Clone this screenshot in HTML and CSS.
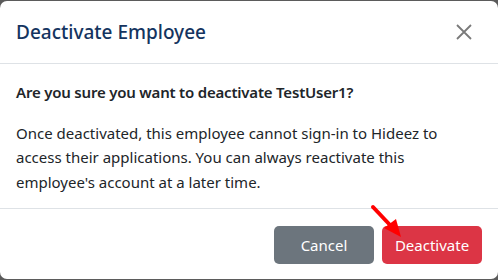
FILE: index.html
```html
<!DOCTYPE html>
<html lang="en">
<head>
    <meta charset="UTF-8">
    <title>Deactivate Employee</title>
    <link rel="stylesheet" href="styles.css">
</head>
<body>
    <div class="modal">
        <div class="modal-header">
            <h5 class="modal-title">Deactivate Employee</h5>
            <button class="btn-close" type="button" aria-label="Close">
                <svg width="18" height="18" viewBox="0 0 18 18">
                    <path d="M2 2L16 16M16 2L2 16" stroke="#7a7a7a" stroke-width="1.8" fill="none"/>
                </svg>
            </button>
        </div>
        <div class="modal-body">
            <p class="question">Are you sure you want to deactivate TestUser1?</p>
            <p class="note">Once deactivated, this employee cannot sign-in to Hideez to access their applications. You can always reactivate this employee's account at a later time.</p>
        </div>
        <div class="modal-footer">
            <button class="btn btn-secondary" type="button">Cancel</button>
            <button class="btn btn-danger" type="button">Deactivate</button>
            <svg class="arrow" width="40" height="40" viewBox="0 0 40 40">
                <path d="M3 3L20 21" stroke="#ff0000" stroke-width="4" stroke-linecap="round"/>
                <path d="M14 24L31 33L26 15Z" fill="#ff0000"/>
            </svg>
        </div>
    </div>
</body>
</html>
```

FILE: styles.css
```css
html,
body {
    margin: 0;
    padding: 0;
}

body {
    background-color: #5b5b5b;
    padding-top: 1px;
    padding-bottom: 2px;
    font-family: "Noto Sans", "Segoe UI", sans-serif;
    color: #212529;
}

.modal {
    background-color: #fff;
    border-radius: 7px;
    width: 498px;
}

.modal-header {
    display: flex;
    align-items: center;
    justify-content: space-between;
    padding: 16px;
    border-bottom: 1px solid #dee2e6;
}

.modal-title {
    margin: 0;
    font-size: 19px;
    font-weight: 500;
    line-height: 30px;
    color: #143460;
}

.btn-close {
    display: flex;
    border: none;
    background: none;
    padding: 0;
    margin-right: 9px;
}

.modal-body {
    padding: 16px 16px 14px 16px;
}

.modal-body p {
    margin: 0 0 16px 0;
    font-size: 15px;
    line-height: 24.5px;
}

.modal-body p.note {
    margin-bottom: 0;
}

.question {
    font-weight: 600;
    letter-spacing: -0.2px;
}

.modal-footer {
    position: relative;
    display: flex;
    justify-content: flex-end;
    gap: 8px;
    padding: 17px 16px 15px 16px;
    border-top: 1px solid #dee2e6;
}

.btn {
    height: 38px;
    width: 100px;
    border: none;
    border-radius: 5px;
    color: #fff;
    font-family: inherit;
    font-size: 15px;
}

.btn-secondary {
    background-color: #6c757d;
}

.btn-danger {
    background-color: #dc3545;
}

.arrow {
    position: absolute;
    left: 370px;
    top: -5px;
}
```
